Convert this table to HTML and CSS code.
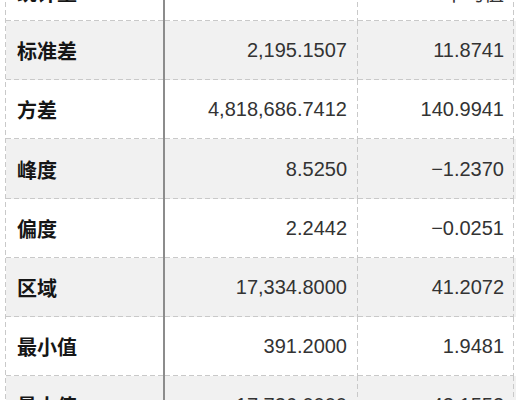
FILE: index.html
```html
<!DOCTYPE html>
<html lang="zh">
<head>
<meta charset="utf-8">
<link rel="stylesheet" href="styles.css">
</head>
<body>
<div class="page">
  <div class="table">
    <div class="row head">
      <div class="cell label">统计量</div>
      <div class="cell num"></div>
      <div class="cell num last">平均值</div>
    </div>
    <div class="row alt">
      <div class="cell label">标准差</div>
      <div class="cell num">2,195.1507</div>
      <div class="cell num last">11.8741</div>
    </div>
    <div class="row">
      <div class="cell label">方差</div>
      <div class="cell num">4,818,686.7412</div>
      <div class="cell num last">140.9941</div>
    </div>
    <div class="row alt">
      <div class="cell label">峰度</div>
      <div class="cell num">8.5250</div>
      <div class="cell num last">&minus;1.2370</div>
    </div>
    <div class="row">
      <div class="cell label">偏度</div>
      <div class="cell num">2.2442</div>
      <div class="cell num last">&minus;0.0251</div>
    </div>
    <div class="row alt">
      <div class="cell label">区域</div>
      <div class="cell num">17,334.8000</div>
      <div class="cell num last">41.2072</div>
    </div>
    <div class="row">
      <div class="cell label">最小值</div>
      <div class="cell num">391.2000</div>
      <div class="cell num last">1.9481</div>
    </div>
    <div class="row alt">
      <div class="cell label">最大值</div>
      <div class="cell num">17,726.0000</div>
      <div class="cell num last">43.1553</div>
    </div>
  </div>
</div>
</body>
</html>
```

FILE: styles.css
```css
html, body {
  margin: 0;
  padding: 0;
  background: #ffffff;
}

.page {
  width: 520px;
  height: 400px;
  overflow: hidden;
}

.table {
  margin-top: -38px;
  margin-left: 5px;
  width: 510px;
  display: flex;
  flex-direction: column;
  background-image: repeating-linear-gradient(to bottom, #c9c9c9 0 5px, transparent 5px 8px);
  background-size: 1px 100%;
  background-repeat: no-repeat;
  background-position: left top;
  padding-left: 1px;
}

.row {
  display: grid;
  grid-template-columns: 159px 193px 156px;
  height: 59.17px;
  background-color: #ffffff;
}

.row.alt {
  background-color: #f1f1f1;
}

.cell {
  display: flex;
  align-items: center;
  box-sizing: border-box;
  background-image:
    repeating-linear-gradient(to right, #c9c9c9 0 5px, transparent 5px 8px),
    repeating-linear-gradient(to bottom, #c9c9c9 0 5px, transparent 5px 8px);
  background-size: 100% 1px, 1px 100%;
  background-position: left bottom, right top;
  background-repeat: no-repeat;
}

.label {
  padding-left: 11px;
  font-family: "Noto Sans CJK SC", "Noto Sans", sans-serif;
  font-weight: 700;
  font-size: 20px;
  color: #161616;
  border-right: 2px solid #8c8c8c;
  background-image: repeating-linear-gradient(to right, #c9c9c9 0 5px, transparent 5px 8px);
  background-size: 100% 1px;
  background-position: left bottom;
}

.num {
  justify-content: flex-end;
  padding-right: 11px;
  font-family: "Liberation Sans", Arial, sans-serif;
  font-size: 20px;
  color: #333333;
}

.last {
  padding-right: 10px;
}

.head .cell {
  align-items: flex-end;
  padding-bottom: 14px;
}

.head .last {
  font-family: "Noto Sans CJK SC", sans-serif;
  font-weight: 400;
  color: #333333;
}
```
